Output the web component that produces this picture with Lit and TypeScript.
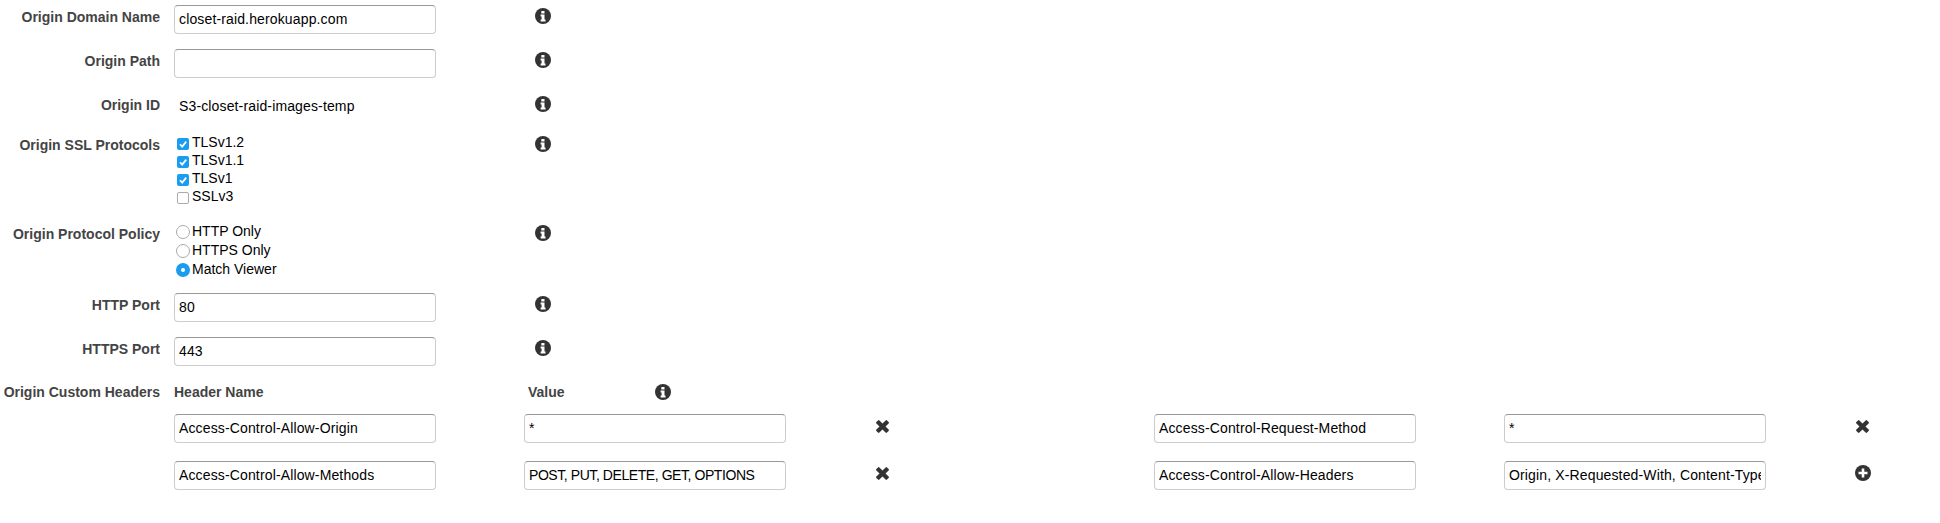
import { LitElement, html, css, svg, nothing } from "lit";
import { customElement } from "lit/decorators.js";

const infoIcon = svg`<circle cx="8" cy="8" r="8" fill="#333"></circle>
  <rect x="6.3" y="3" width="3.2" height="2.6" rx=".4" fill="#fff"></rect>
  <path d="M5.6 6.6h3.9v5h1v1.9H5.6v-1.9h1v-3.1h-1z" fill="#fff"></path>`;

const plusIcon = svg`<circle cx="8" cy="8" r="8" fill="#333"></circle>
  <path d="M6.7 3.5h2.6v3.2h3.2v2.6H9.3v3.2H6.7V9.3H3.5V6.7h3.2z" fill="#fff"></path>`;

const timesIcon = svg`<path d="M3.4.4 6.5 3.5 9.6.4a1 1 0 0 1 1.4 0l1.6 1.6a1 1 0 0 1 0 1.4L9.5 6.5l3.1 3.1a1 1 0 0 1 0 1.4L11 12.6a1 1 0 0 1-1.4 0L6.5 9.5l-3.1 3.1a1 1 0 0 1-1.4 0L.4 11a1 1 0 0 1 0-1.4l3.1-3.1L.4 3.4a1 1 0 0 1 0-1.4L2 .4a1 1 0 0 1 1.4 0z" fill="#333"></path>`;

const checkMark = svg`<path d="M3 6.2 5.2 8.6 9.2 3.6" fill="none" stroke="#fff" stroke-width="1.7"></path>`;

const protocols = [
  { label: "TLSv1.2", on: true },
  { label: "TLSv1.1", on: true },
  { label: "TLSv1", on: true },
  { label: "SSLv3", on: false },
];

const policies = [
  { label: "HTTP Only", on: false },
  { label: "HTTPS Only", on: false },
  { label: "Match Viewer", on: true },
];

const headerRows = [
  [
    ["Access-Control-Allow-Origin", "*", "x"],
    ["Access-Control-Request-Method", "*", "x"],
  ],
  [
    ["Access-Control-Allow-Methods", "POST, PUT, DELETE, GET, OPTIONS", "x"],
    ["Access-Control-Allow-Headers", "Origin, X-Requested-With, Content-Type", "+"],
  ],
];

@customElement("app-root")
export class AppRoot extends LitElement {
  static styles = css`
    :host {
      display: block;
      height: 523px;
      background: #fff;
      overflow: hidden;
      font-family: "Liberation Sans", Arial, sans-serif;
      font-size: 14px;
      color: #000;
    }
    form {
      display: flex;
      flex-direction: column;
      gap: 15px;
      padding-top: 5px;
    }
    .row {
      display: flex;
      align-items: flex-start;
    }
    .label {
      width: 160px;
      flex: none;
      margin-right: 14px;
      padding-top: 4px;
      line-height: 16px;
      text-align: right;
      font-weight: bold;
      color: #444;
      white-space: nowrap;
    }
    .control {
      box-sizing: border-box;
      width: 262px;
      flex: none;
    }
    .input {
      box-sizing: border-box;
      width: 262px;
      height: 29px;
      padding: 0 4px;
      line-height: 27px;
      letter-spacing: 0.14px;
      background: #fff;
      border: 1px solid #ccc;
      border-top-color: #999;
      border-radius: 4px;
      white-space: nowrap;
      overflow: clip;
      overflow-clip-margin: content-box;
    }
    .input.caps {
      letter-spacing: -0.43px;
    }
    .static {
      height: 29px;
      padding-left: 5px;
      line-height: 26px;
      letter-spacing: 0.14px;
    }
    .info {
      width: 16px;
      height: 16px;
      flex: none;
      margin: 3px 0 0 99px;
    }
    .ssl {
      margin-top: -4px;
    }
    .policy {
      margin-top: 2px;
    }
    .policy .control {
      margin-top: -1px;
      height: 57px;
    }
    .option {
      display: flex;
      align-items: center;
      height: 18px;
      padding-left: 3px;
    }
    .policy .option {
      height: 19px;
      padding-left: 2px;
    }
    .box {
      width: 12px;
      height: 12px;
      flex: none;
      margin: 3px 3px 0 0;
    }
    .radio {
      box-sizing: border-box;
      width: 14px;
      height: 14px;
      flex: none;
      margin: 3px 2px 0 0;
      border: 1px solid #aaa;
      border-radius: 50%;
      display: flex;
      align-items: center;
      justify-content: center;
      background: #fff;
    }
    .radio.on {
      border: 0;
      background: #1a9cf0;
    }
    .radio.on::after {
      content: "";
      width: 4px;
      height: 4px;
      border-radius: 50%;
      background: #fff;
    }
    .check {
      box-sizing: border-box;
      width: 12px;
      height: 12px;
      border: 1px solid #aaa;
      border-radius: 2px;
      background: #fff;
      display: block;
    }
    .check.on {
      border: 0;
      background: #1a9cf0;
    }
    .heads {
      display: flex;
      align-items: flex-start;
      height: 18px;
    }
    .heads .label {
      padding-top: 3px;
    }
    .head {
      font-weight: bold;
      color: #444;
      padding-top: 3px;
      line-height: 16px;
    }
    .head.name {
      width: 354px;
    }
    .head.value {
      width: 127px;
    }
    .head-info {
      width: 16px;
      height: 16px;
      margin-top: 3px;
    }
    .grid {
      display: grid;
      grid-template-columns: 262px 262px 192px 262px 262px 20px;
      column-gap: 88px;
      row-gap: 18px;
      padding-left: 174px;
    }
    .action {
      display: block;
    }
    .action.x {
      width: 13px;
      height: 13px;
      margin: 6px 0 0 2px;
    }
    .action.plus {
      width: 16px;
      height: 16px;
      margin: 4px 0 0 1px;
    }
  `;

  private textRow(label: string, value: string) {
    return html`
      <div class="row">
        <div class="label">${label}</div>
        <div class="control"><div class="input">${value}</div></div>
        <svg class="info" viewBox="0 0 16 16">${infoIcon}</svg>
      </div>
    `;
  }

  render() {
    return html`
      <form>
        ${this.textRow("Origin Domain Name", "closet-raid.herokuapp.com")}
        ${this.textRow("Origin Path", "")}
        <div class="row">
          <div class="label">Origin ID</div>
          <div class="control static">S3-closet-raid-images-temp</div>
          <svg class="info" viewBox="0 0 16 16">${infoIcon}</svg>
        </div>
        <div class="row ssl">
          <div class="label">Origin SSL Protocols</div>
          <div class="control">
            ${protocols.map(
              (p) => html`<div class="option">
                <svg class="box check ${p.on ? "on" : ""}" viewBox="0 0 12 12">
                  ${p.on ? checkMark : nothing}
                </svg>
                ${p.label}
              </div>`
            )}
          </div>
          <svg class="info" viewBox="0 0 16 16">${infoIcon}</svg>
        </div>
        <div class="row policy">
          <div class="label">Origin Protocol Policy</div>
          <div class="control">
            ${policies.map(
              (p) => html`<div class="option">
                <span class="radio ${p.on ? "on" : ""}"></span>${p.label}
              </div>`
            )}
          </div>
          <svg class="info" viewBox="0 0 16 16">${infoIcon}</svg>
        </div>
        ${this.textRow("HTTP Port", "80")}
        ${this.textRow("HTTPS Port", "443")}
        <div class="heads">
          <div class="label">Origin Custom Headers</div>
          <div class="head name">Header Name</div>
          <div class="head value">Value</div>
          <svg class="head-info" viewBox="0 0 16 16">${infoIcon}</svg>
        </div>
        <div class="grid">
          ${headerRows.map((row) =>
            row.map(
              ([name, value, action]) => html`
                <div class="input">${name}</div>
                <div class="input ${value.startsWith("POST") ? "caps" : ""}">${value}</div>
                ${action === "x"
                  ? html`<svg class="action x" viewBox="0 0 13 13">${timesIcon}</svg>`
                  : html`<svg class="action plus" viewBox="0 0 16 16">${plusIcon}</svg>`}
              `
            )
          )}
        </div>
      </form>
    `;
  }
}
